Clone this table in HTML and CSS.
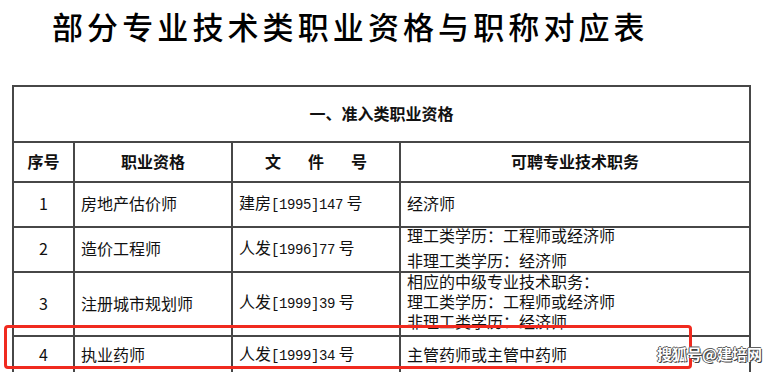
FILE: index.html
```html
<!DOCTYPE html>
<html lang="zh-CN">
<head>
<meta charset="utf-8">
<title>部分专业技术类职业资格与职称对应表</title>
<link rel="stylesheet" href="styles.css">
</head>
<body>
<div class="page">
  <h1 class="title">部分专业技术类职业资格与职称对应表</h1>
  <table class="grid">
    <colgroup>
      <col class="c-no"><col class="c-name"><col class="c-doc"><col class="c-job">
    </colgroup>
    <tr class="r-section"><th colspan="4">一、准入类职业资格</th></tr>
    <tr class="r-head">
      <th>序号</th><th>职业资格</th><th class="spaced">文件号</th><th>可聘专业技术职务</th>
    </tr>
    <tr class="r-1">
      <td class="no">1</td><td>房地产估价师</td><td>建房<span class="num">[1995]147</span> 号</td><td>经济师</td>
    </tr>
    <tr class="r-2">
      <td class="no">2</td><td>造价工程师</td><td>人发<span class="num">[1996]77</span> 号</td>
      <td><div class="lines lh25">理工类学历：工程师或经济师<br>非理工类学历：经济师</div></td>
    </tr>
    <tr class="r-3">
      <td class="no">3</td><td>注册城市规划师</td><td>人发<span class="num">[1999]39</span> 号</td>
      <td><div class="lines lh20">相应的中级专业技术职务：<br>理工类学历：工程师或经济师<br>非理工类学历：经济师</div></td>
    </tr>
    <tr class="r-4">
      <td class="no">4</td><td>执业药师</td><td>人发<span class="num">[1999]34</span> 号</td><td>主管药师或主管中药师</td>
    </tr>
  </table>
</div>
<div class="highlight"></div>
<div class="watermark">搜狐号@建培网</div>
</body>
</html>
```
FILE: styles.css
```css
html, body {
  margin: 0;
  padding: 0;
  background: #ffffff;
}
body {
  width: 780px;
  height: 372px;
  overflow: hidden;
  position: relative;
  font-family: "Noto Sans CJK SC", "Noto Sans", sans-serif;
  color: #111;
}
.page {
  padding-left: 12px;
}
.title {
  margin: 0 0 33px 40px;
  height: 52px;
  line-height: 52px;
  font-size: 31px;
  font-weight: 500;
  letter-spacing: 4.1px;
  color: #000;
}
.grid {
  border-collapse: collapse;
  table-layout: fixed;
  width: 737px;
  font-size: 16px;
}
.grid th, .grid td {
  border: 2px solid #474747;
  padding: 0 0 3px 6px;
  vertical-align: middle;
  white-space: nowrap;
  overflow: visible;
  line-height: 20px;
}
.c-no { width: 61px; }
.c-name { width: 158px; }
.c-doc { width: 168px; }
.c-job { width: 350px; }
.grid th {
  font-weight: 700;
  text-align: center;
  padding: 0 0 3px 0;
}
.r-section { height: 56px; }
.r-head { height: 40px; }
.r-1 { height: 45px; }
.r-2 { height: 45px; }
.r-3 { height: 64px; }
.r-4 { height: 39px; }
.grid td.no {
  text-align: center;
  padding: 0 0 3px 0;
}
.spaced {
  letter-spacing: 27px;
  text-indent: 27px;
}
.num {
  font-family: "Liberation Mono", monospace;
  font-size: 14px;
  letter-spacing: -0.4px;
}
.lines {
  line-height: 20px;
}
.lh25 {
  line-height: 25px;
  margin: -5px 0 -5px;
}
.lh20 {
  line-height: 20px;
  margin: -5px 0 -1px;
}
.highlight {
  position: absolute;
  left: 4px;
  top: 325px;
  width: 682px;
  height: 38px;
  border: 3px solid #f02a1f;
  border-radius: 4px;
}
.watermark {
  position: absolute;
  left: 657px;
  top: 344px;
  font-size: 15px;
  font-weight: 700;
  line-height: 20px;
  color: #ffffff;
  text-shadow: 0 0 1px #333, 1px 1px 0 #444, -1px 0 0 #666, 0 -1px 0 #666;
}
```
